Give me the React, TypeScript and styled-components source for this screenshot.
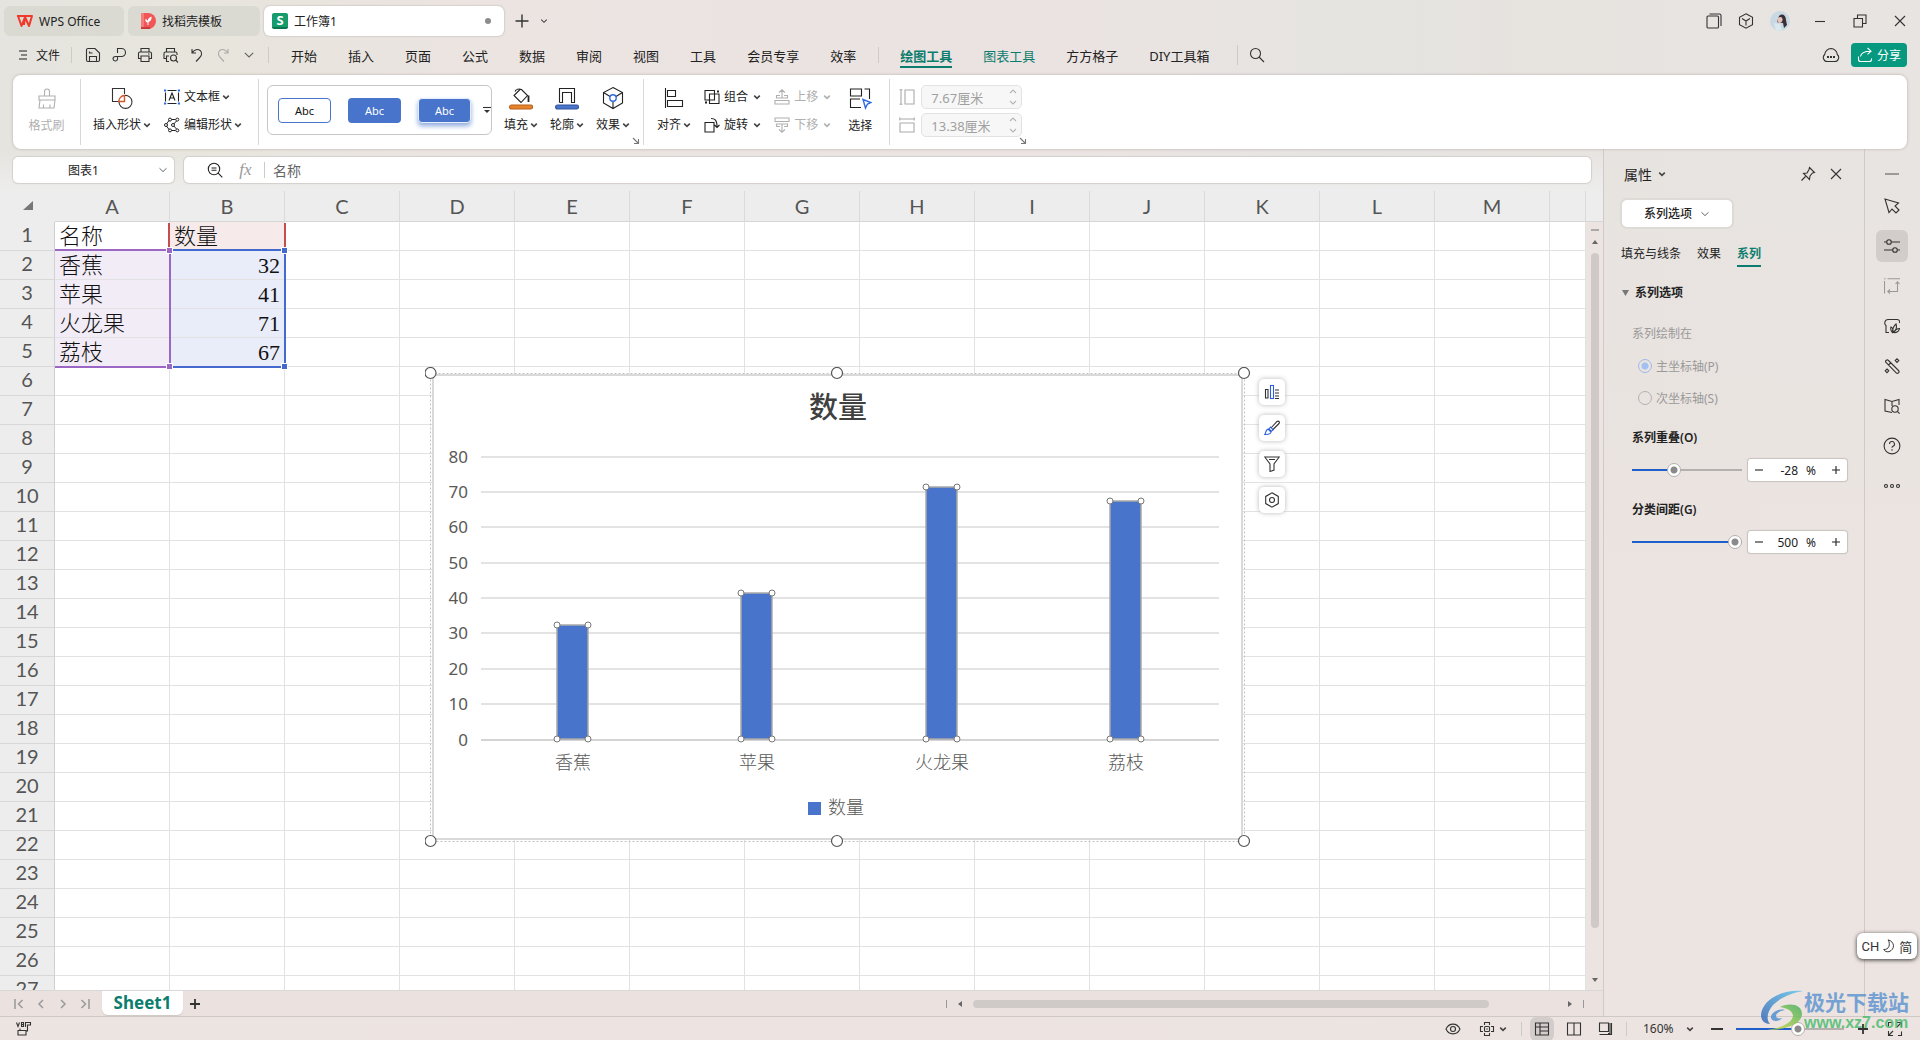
import React, { useState } from 'react';
import styled, { createGlobalStyle, css } from 'styled-components';

const UI = '"Noto Sans", "Noto Sans CJK SC", sans-serif';
const TEAL = '#0b7d6e';
const BLUE = '#4874cb';
const LINE = '#e2e2e2';

const Global = createGlobalStyle`
  *, *::before, *::after { box-sizing: border-box; }
  html, body { margin: 0; padding: 0; height: 100%; overflow: hidden; }
  body { font-family: ${UI}; font-size: 12px; color: #222; }
  #root { height: 100%; }
  button, input, select { font: inherit; color: inherit; margin: 0; padding: 0; border: 0; background: none; outline: none; }
  svg { display: block; flex: none; }
`;

/* ---------- icons ---------- */

type IconProps = { size?: number; box?: number; w?: number; color?: string; children: React.ReactNode };
const Icon = ({ size = 16, box = 16, w = 1.1, color = 'currentColor', children }: IconProps) => (
  <svg width={size} height={size} viewBox={`0 0 ${box} ${box}`} fill="none" stroke={color} strokeWidth={w} aria-hidden="true">
    {children}
  </svg>
);
const Chevron = ({ size = 8, w = 1.6, color = '#444' }: { size?: number; w?: number; color?: string }) => (
  <Icon size={size} box={8} w={w} color={color}><path d="M1.2 2.6 4 5.3l2.8-2.7" /></Icon>
);
const Thin = ({ size = 10 }: { size?: number }) => <Chevron size={size} w={0.8} color="#666" />;

const IcSave = () => <Icon><path d="M1.5 3A1.5 1.5 0 0 1 3 1.5h7L14.5 6v7a1.5 1.5 0 0 1-1.5 1.5H3A1.5 1.5 0 0 1 1.5 13zM4.5 14.5v-5h7v5M4.500 4.500v1.500h3" /></Icon>;
const IcShareLink = () => <Icon><path d="M6.500 6V1.500h4a4 4 0 0 1 0 8h-6A2.500 2.500 0 0 0 2 12a2.300 2.300 0 0 0 4.500.3V9.500" /></Icon>;
const IcPrint = () => <Icon><path d="M4 5V1.500h8V5M4 11.500H1.500v-5A1.500 1.500 0 0 1 3 5h10a1.500 1.500 0 0 1 1.500 1.500v5H12M4 9h8v5.500H4zM11 7h1.500" /></Icon>;
const IcPreview = () => <Icon><path d="M3.500 5V1.500h8V5M6 14.500H3.500v-3H1v-5A1.500 1.500 0 0 1 2.500 5h10A1.500 1.500 0 0 1 14 6.500V8M3.500 11.500V9H6" /><circle cx="10.500" cy="11" r="3" /><path d="m12.800 13.200 2.200 2.300" /></Icon>;
const IcUndo = () => <Icon><path d="M3 2v4h4M3.200 5.800C5 2.500 9 1.500 11.300 3.700c2.500 2.500 1 5.300-1 7.300L7 14.500" /></Icon>;
const IcRedo = () => <Icon><path d="M13 2v4H9M12.800 5.800C11 2.500 7 1.500 4.700 3.700c-2.500 2.500-1 5.300 1 7.300L9 14.500" /></Icon>;
const IcSearch = () => <Icon><circle cx="6.500" cy="6.500" r="5" /><path d="m10 10 5 5" /></Icon>;
const IcPages = () => <Icon><rect x="1" y="3" width="11.500" height="12" rx="1" /><path d="M3.500 1h10A1.500 1.500 0 0 1 15 2.500V13" /></Icon>;
const IcCube = () => <Icon><path d="M8 .8 14.500 4.300v7.400L8 15.200l-6.500-3.500V4.300zM4 5.500 8 8l4-2.500M8 8v4.500" /></Icon>;
const IcMin = () => <Icon><path d="M3 8.500h10" /></Icon>;
const IcRestore = () => <Icon><path d="M2 5.500h8.500V14H2zM5.500 5.500V2H14v8.500h-3.500" /></Icon>;
const IcClose = () => <Icon><path d="m3 3 10 10M13 3 3 13" /></Icon>;
const IcCloud = () => <Icon size={18} box={18}><path d="M5.500 15.500A4 4 0 0 1 2.700 8.500 6.500 6.500 0 0 1 9 2.500a6.500 6.500 0 0 1 6.300 6 4 4 0 0 1-2.800 7z" /><path d="M5 11h2M8 11h2M11 11h2" strokeWidth="2" /></Icon>;
const IcShare = () => <Icon><path d="M1.500 9.500v3a2 2 0 0 0 2 2h9a2 2 0 0 0 2-2v-1M3.500 9.500C4 6 7 4.200 13.500 4.200M10.500 1 14 4.200l-3.500 3.200" /></Icon>;
const IcBrush = () => <Icon size={24} box={24}><path d="M9.500 10V5.500a2.500 2.500 0 0 1 5 0V10M4 10h16v4H4zM5 14 4 22h15l1-8M8.500 22v-3.500M15 22v-3.500" /></Icon>;
const IcShapes = () => <Icon size={24} box={24} color="#333"><path d="M14.500 8V2.500h-12v13h6" /><path d="M14.500 9.500a6.500 6.500 0 1 1-5.500 6" /><path d="M8.800 15.500a6 6 0 0 1 5.700-6v6z" stroke="#d0592a" strokeWidth="1.400" /></Icon>;
const IcTextBox = () => <Icon><path d="M3.500 1.500h9M3.500 14.500h9M1.500 3.500v9M14.500 3.500v9" /><path d="m5 11.500 3-7.500 3 7.500M6 9h4" /><path d="M0 1.500h2.200M13.800 1.500H16M0 14.500h2.200M13.800 14.500H16" stroke="#2f6ae0" strokeWidth="2.200" /></Icon>;
const IcEditShape = () => <Icon w={1}><path d="M5 3.500 2.500 7M2.500 9 5 12.500M7.500 2.500h4M7.500 13.500h4M12.500 4 9.800 7M12.500 12 9.800 9" /><circle cx="6" cy="2.600" r="1.500" /><circle cx="13.300" cy="2.600" r="1.500" /><circle cx="2" cy="8" r="1.500" /><circle cx="9" cy="8" r="1.500" /><circle cx="6" cy="13.400" r="1.500" /><circle cx="13.300" cy="13.400" r="1.500" /></Icon>;
const IcFill = () => <Icon size={24} box={24}><path d="M6 5.500c1-2.500 4-3 6.500-2l6 6-6.500 7-7-7 6-6" /><path d="M19.500 9.500v6.500" strokeWidth="1.800" /><rect x=".6" y="19" width="23" height="4" rx="2" fill="#e8832d" stroke="#b9601a" /></Icon>;
const IcOutline = () => <Icon size={24} box={24}><path d="M4.500 16.500v-14h15v14h-3v-10h-9v10h-3" /><rect x=".6" y="19" width="23" height="4" rx="2" fill={BLUE} stroke="#32549b" /></Icon>;
const IcEffect = () => <Icon size={24} box={24}><path d="m12 1.500 9.500 5v10.500L12 22.500l-9.500-5.500V6.500zM2.500 6.500l6.500 4M21.500 6.500l-6.500 4M12 16v6.500" /><circle cx="12" cy="12" r="3.200" stroke="#2f6ae0" strokeWidth="1.400" /></Icon>;
const IcAlign = () => <Icon size={24} box={24}><path d="M3.500 2v20M5.500 4.500h8v6h-8zM5.500 14.500h15v6h-15z" /></Icon>;
const IcGroup = () => <Icon><path d="M1 1.500h9.500V11H1zM5.500 5H15v9.500H5.500z" /><path d="M13 2.500h2M1 13.500h2" strokeWidth="2" /></Icon>;
const IcRotate = () => <Icon><path d="M1 5.500h9V15H1zM7 1.500c4 0 6 1.500 6 8M10.500 8l2.500 2.500L15.500 8" /></Icon>;
const IcUp = () => <Icon><path d="M1 11.500h14V15H1zM5 9H2.500V6.500H6M11 9h2.500V6.500H10M5 9h6M8 9.500V1M5 3.500 8 .8l3 2.700" /></Icon>;
const IcDown = () => <Icon><path d="M1 1h14v3.500H1zM5 7H2.500v2.500H6M11 7h2.500v2.500H10M5 7h6M8 6.500V15M5 12.500l3 2.700 3-2.700" /></Icon>;
const IcSelect = () => <Icon size={24} box={24}><path d="M2.500 3h11v7h-11zM16.500 3h5v10M13 21.500H2.500V13H12" /><path d="m15 13.500 8 3-3.500 1.500-2 4z" stroke="#2f6ae0" strokeWidth="1.400" /></Icon>;
const IcHeight = () => <Icon><path d="M2 .8v14.400M.5.800h3M.5 15.200h3M6 1h9v14H6z" /></Icon>;
const IcWidth = () => <Icon><path d="M.8 2h14.400M.8.500v3M15.200.500v3M1 6h14v9H1z" /></Icon>;
const IcCorner = () => <Icon size={8} box={8}><path d="m1 1 5.500 5.500M6.500 2v4.500H2" /></Icon>;
const IcZoomOut = () => <Icon><circle cx="7" cy="7" r="5.700" /><path d="M4.500 6h5M4.500 8.300h5M11.200 11.200 15.300 15.300" /></Icon>;
const IcPin = () => <Icon><path d="m9.500 1.500 5 5-2 .5-2.500 3-.5 3.500-6-6L7 7l2-3.500zM5.500 10.500l-4 4" /></Icon>;
const IcDash = () => <Icon w={1.6} color="#888"><path d="M1 8h14" /></Icon>;
const IcCursor = () => <Icon><path d="m1 1 4 13.500 3-3.500 4 4 3-3-4-4 3.500-3z" /></Icon>;
const IcSliders = () => <Icon><path d="M0 4h2.500M7.500 4H16M0 12h8.500M13.500 12H16" /><circle cx="5" cy="4" r="2.300" /><circle cx="11" cy="12" r="2.300" /></Icon>;
const IcTranspose = () => <Icon color="#999"><path d="M.5 3v12.500M3.500.8H16M0 .8h1.500M13.500 4v9.500H4M11.500 6l2-2.200 2 2.200M6 11.500l-2.200 2L6 15.500" /></Icon>;
const IcGallery = () => <Icon><path d="M5 14.500H2V7.500C-.2 6 .8 1.500 4 1.500h9c2 0 3 1.500 2.500 3.500" /><path d="M8.500 14.500C6.500 12.500 6.500 10.500 7 9c2 1 2.500 3 1.500 5.500zc0-4 1-6.500 3.500-8.500 1 3.500 0 7-3.500 8.500zM9.500 14.500c2-3 4-4 6-4-.5 3-3 4.500-6 4z" /></Icon>;
const IcMagic = () => <Icon><path d="m4.500 2.500 10 10a1.400 1.400 0 0 1-2.300 2.300L2 4.500a1.600 1.600 0 0 1 2.500-2zM4.500 7l2.500-2.500" /><path d="m13 .8 1.800 1.800L13 4.400l-1.800-1.800zM3 11l1.800 1.800L3 14.600l-1.800-1.800z" /></Icon>;
const IcBook = () => <Icon><path d="M8 14.500 1 13V1.500l7 2 7-2V7M8 3.500V8" /><circle cx="11" cy="11" r="3.200" /><path d="m13.300 13.300 2.300 2.300" /></Icon>;
const IcHelp = () => <Icon size={18} box={18}><circle cx="9" cy="9" r="7.900" /><path d="M6.500 7a2.500 2.500 0 1 1 3.500 2.300c-.8.400-1 .7-1 1.500M9 12.300v1.400" /></Icon>;
const IcDots = () => <Icon><circle cx="2" cy="8" r="1.500" /><circle cx="8" cy="8" r="1.500" /><circle cx="14" cy="8" r="1.500" /></Icon>;
const IcChartEl = () => <Icon color="#333"><path d="M1.500 5.500H4V14H1.500zM11 6h4M11 9h4M11 12h4M11 14.500h4" /><path d="M6.500 1.500h3v13h-3z" stroke="#2f5fe0" /></Icon>;
const IcStyle = () => <Icon color="#333"><path d="m7 8 6-6.500a1.400 1.400 0 0 1 2 2L8.500 10" /><path d="M.8 14.500c1-1 .5-3 2-4.500a2.300 2.300 0 0 1 3.400 3.300c-1.400 1.300-3.500 1.200-5.400 1.200zM4.500 9.500l2-2.500 2.700 2.700-2.500 2z" stroke="#2f5fe0" /></Icon>;
const IcFilter = () => <Icon color="#333"><path d="M.8 1h14.400L10 8v6l-4 1.500V8zM5 3.500h6" /></Icon>;
const IcHex = () => <Icon color="#333"><path d="M8 .8 14.300 4.400v7.200L8 15.200l-6.300-3.600V4.400z" /><circle cx="8" cy="8" r="2.500" /></Icon>;
const IcEye = () => <Icon><path d="M1 8c3-6.500 11-6.500 14 0-3 6.500-11 6.500-14 0z" /><circle cx="8" cy="8" r="2.500" /></Icon>;
const IcCross = () => <Icon><path d="M5.500 4V1.500h5V4M5.500 12v2.500h5V12M4 5.500H1.500v5H4M12 5.500h2.500v5H12" /><rect x="5.500" y="5.500" width="5" height="5" rx="1" /><path d="M8 7.200v1.600" /></Icon>;
const IcNormal = () => <Icon><path d="M1.500 2h13v12h-13zM1.500 6h13M6 2v12M6 10h8.500" /></Icon>;
const IcBreak = () => <Icon><path d="M1.500 2h13v12h-13zM8 2v12" /></Icon>;
const IcPageView = () => <Icon><path d="M1.500 2h9v8.500h-9zM13.500 2v11.500h-12M10 12.500h2V2" /></Icon>;
const IcFull = () => <Icon><path d="M10 1.500h4.500V6M14.500 1.500 10 6M6 14.500H1.500V10M1.500 14.500 6 10M1.500 5.500v-4H5M14.500 10.500v4H11" /></Icon>;
const IcMoon = () => <Icon size={14}><path d="M7 1c8 2 8 11 1 13.500-3 .5-5-.5-6-2.500 6 .5 8-6 5-11z" /></Icon>;

/* ---------- shell ---------- */

const Shell = styled.div`
  position: relative; display: flex; flex-direction: column; height: 100vh; overflow: hidden;
  background:
    linear-gradient(180deg, rgba(237, 228, 225, 0) 20%, rgba(237, 228, 225, .9) 70%),
    linear-gradient(90deg, #e5e4df 0%, #e7e5dc 9%, #ebe4e1 24%, #ebe3e1 54%, #e5e4e1 71%, #e7e3df 80%, #e8e4e1 100%);
`;
const IconButton = styled.button<{ $w?: number; $h?: number; $active?: boolean; $muted?: boolean }>`
  display: inline-flex; align-items: center; justify-content: center; flex: none; gap: 4px;
  width: ${p => p.$w ?? 26}px; height: ${p => p.$h ?? 24}px; border-radius: 6px;
  color: ${p => (p.$muted ? '#aaa' : '#333')};
  background: ${p => (p.$active ? '#d2cdca' : 'transparent')};
`;
const Spacer = styled.div`flex: 1;`;

const TitleBar = styled.header`
  display: flex; align-items: center; height: 40px; padding: 2px 7px 0 4px; gap: 4px;
`;
const DocTab = styled.button<{ $w: number; $active?: boolean }>`
  display: flex; align-items: center; gap: 6px; width: ${p => p.$w}px; height: 30px;
  padding: 0 13px 0 ${p => (p.$active ? 8 : 13)}px; border-radius: 6px; text-align: left;
  ${p => p.$active
    ? css`background: #fff; box-shadow: 0 0 2px #aaa39f;`
    : css`background: #dadad3;`}
`;
const Badge = styled.span`
  display: grid; place-items: center; width: 16px; height: 16px; border-radius: 2px;
  background: #159b6c; border-bottom: 2px solid #0d7551; color: #fff; font-size: 13px; line-height: 14px; font-weight: 700;
`;
const Unsaved = styled.i`width: 6px; height: 6px; border-radius: 50%; background: #8c8c8c; margin-left: auto;`;
const WinButtons = styled.div`display: flex; align-items: center; gap: 6px;`;
const WinGroup = styled.div`display: flex; gap: 14px; margin-left: 8px;`;

const MenuBar = styled.nav`display: flex; align-items: center; height: 35px; padding: 0 13px 5px 12px;`;
const FileButton = styled.button`display: flex; align-items: center; gap: 8px; padding-left: 6px; width: 59px; height: 24px;`;
const VLine = styled.i<{ $h?: number; $m?: string }>`
  width: 1px; height: ${p => p.$h ?? 16}px; margin: ${p => p.$m ?? '0'}; background: #cfcac6; flex: none;
`;
const MenuTabs = styled.div`display: flex; align-items: center; gap: 31px; padding-top: 1px;`;
const MenuTab = styled.button<{ $tone?: 'teal'; $on?: boolean }>`
  font-size: 13px; line-height: 20px; padding-top: 2px; white-space: nowrap;
  color: ${p => (p.$tone ? TEAL : '#222')};
  font-weight: ${p => (p.$on ? 700 : 400)};
  border-bottom: 2px solid ${p => (p.$on ? TEAL : 'transparent')};
`;
const ShareButton = styled.button`
  display: flex; align-items: center; gap: 4px; height: 24px; padding: 0 6px; margin-left: 7px;
  background: #06997f; color: #fff; border-radius: 4px; font-size: 12px;
`;

const Ribbon = styled.section`
  display: flex; align-items: flex-start; height: 74px; margin: 0 13px; background: #fff; border-radius: 8px;
  box-shadow: 0 0 3px #b5aeaa; position: relative; z-index: 2; flex: none;
`;
const RibbonLine = styled.i<{ $l?: number; $r?: number }>`
  width: 1px; height: 66px; background: #d8d8d8; margin: 4px ${p => p.$r ?? 0}px 0 ${p => p.$l ?? 0}px; flex: none;
`;
const BigTool = styled.button<{ $w?: number; $off?: boolean }>`
  display: flex; flex-direction: column; align-items: center; gap: 6px; padding-top: 11px;
  ${p => p.$w && css`width: ${p.$w}px;`}
  color: ${p => (p.$off ? '#b0b0b0' : '#222')}; white-space: nowrap;
`;
const Label = styled.span`display: flex; align-items: center; gap: 2px; line-height: 18px; white-space: nowrap;`;
const Stack = styled.div<{ $l?: number }>`
  display: flex; flex-direction: column; gap: 4px; padding-top: 10px; margin-left: ${p => p.$l ?? 0}px;
`;
const SmallTool = styled.button`
  display: flex; align-items: center; gap: 4px; height: 24px; white-space: nowrap; color: #222;
  &:disabled { color: #b0b0b0; }
`;
const ToolRow = styled.div<{ $l?: number; $gap?: number }>`display: flex; gap: ${p => p.$gap ?? 0}px; margin-left: ${p => p.$l ?? 0}px;`;
const Gallery = styled.div`
  display: flex; align-items: center; gap: 17px; width: 225px; height: 50px; margin: 10px 0 0 8px; padding: 0 2px 0 10px;
  border: 1px solid #c6c6c6; border-radius: 6px;
`;
const Swatch = styled.button<{ $kind: 'outline' | 'solid' | 'raised' }>`
  width: 53px; height: 25px; border-radius: 4px; font-size: 11px; flex: none;
  ${p => p.$kind === 'outline' && css`border: 1px solid ${BLUE}; color: #111;`}
  ${p => p.$kind !== 'outline' && css`background: ${BLUE}; color: #fff;`}
  ${p => p.$kind === 'raised' && css`border: 1px solid #e6edfb; box-shadow: 0 3px 5px #8fabdf;`}
`;
const MoreButton = styled.button`margin-left: -5px; color: #333;`;
const CornerButton = styled.button<{ $l?: number }>`
  align-self: flex-end; padding-bottom: 3px; color: #777; width: 8px; height: 13px; margin-left: ${p => p.$l ?? 2}px;
`;
const SizeRow = styled.label`display: flex; align-items: center; gap: 6px; height: 24px; color: #aaa;`;
const SizeField = styled.span`
  display: flex; align-items: center; width: 101px; height: 24px; padding: 0 0 0 9px;
  border: 1px solid #e2e2e2; border-radius: 5px; background: #f7f7f7;
`;
const SizeInput = styled.input`flex: 1; min-width: 0; font-size: 13px; color: #a0a0a0;`;
const Arrows = () => <Icon size={16} color="#b5b5b5"><path d="m5 4 3-3 3 3M5 12l3 3 3-3" /></Icon>;

/* ---------- worksheet ---------- */

const Body = styled.main`display: flex; flex: 1; min-height: 0;`;
const Work = styled.section`
  display: flex; flex-direction: column; flex: 1; min-width: 0;
  background: linear-gradient(180deg, rgba(237,237,237,0) 0, #ededed 42px, #ededed 200px);
`;
const FormulaBar = styled.div`display: flex; gap: 10px; padding: 8px 12px 8px 13px;`;
const Field = styled.div<{ $w?: number }>`
  display: flex; align-items: center; height: 26px; background: #fff; border-radius: 5px; box-shadow: 0 0 1px 1px #d3cfcc;
  ${p => (p.$w ? css`width: ${p.$w}px; padding-right: 6px;` : css`flex: 1; padding-left: 23px;`)}
`;
const NameInput = styled.input`flex: 1; min-width: 0; text-align: center; font-size: 12px; padding-right: 4px;`;
const FormulaInput = styled.input`flex: 1; min-width: 0; padding-left: 8px; font-size: 14px; color: #666;`;
const Fx = styled.span`
  width: 41px; text-align: center; padding-left: 4px; font: italic 17px "Liberation Serif", serif; color: #999;
`;
const GridRow = styled.div`display: flex; flex: 1; min-height: 0;`;
const Canvas = styled.div`position: relative; flex: 1; min-width: 0; overflow: hidden; background: #fff;`;
const Sheet = styled.table`
  table-layout: fixed; width: 100%; border-collapse: separate; border-spacing: 0;
  th { background: #ededed; font: 400 20px/28px Lato, sans-serif; color: #555; padding: 0; text-align: center; }
  thead th { height: 31px; border-right: 1px solid #dadada; border-bottom: 1px solid #d6d6d6; }
  thead th:first-child { border-color: #ededed; }
  tbody th { height: 29px; border-right: 1px solid #d0d0d0; border-bottom: 1px solid #d8d8d8; padding-bottom: 4px; line-height: 24px; }
`;
const Col = styled.col<{ $w?: number }>`${p => p.$w && css`width: ${p.$w}px;`}`;
const Cell = styled.td<{ $fill?: string; $num?: boolean }>`
  height: 29px; padding: 2px 4px 0; border-right: 1px solid ${LINE}; border-bottom: 1px solid ${LINE};
  background: ${p => p.$fill ?? '#fff'}; text-align: ${p => (p.$num ? 'right' : 'left')};
  font: 300 22px/26px "Liberation Serif", "Noto Sans CJK SC", serif; color: #111; white-space: nowrap;
`;
const Range = styled.i<{ $x: number; $y: number; $w: number; $h: number; $c: string; $sides: string }>`
  position: absolute; left: ${p => p.$x}px; top: ${p => p.$y}px; width: ${p => p.$w}px; height: ${p => p.$h}px;
  border: solid ${p => p.$c}; border-width: ${p => p.$sides}; pointer-events: none;
`;
const Grip = styled.i<{ $x: number; $y: number; $c: string }>`
  position: absolute; left: ${p => p.$x - 3}px; top: ${p => p.$y - 3}px; width: 7px; height: 7px;
  background: ${p => p.$c}; border: 1px solid #fff;
`;
const ChartFrame = styled.figure`position: absolute; left: 425px; top: 176px; margin: 0;`;
const ChartTools = styled.div`position: absolute; left: 1259px; top: 188px; display: flex; flex-direction: column; gap: 10px;`;
const ChartTool = styled.button`
  display: grid; place-items: center; width: 26px; height: 26px; background: #fff; border-radius: 5px; box-shadow: 0 0 5px #b8b8b8;
`;
const VScroll = styled.div`width: 17px; display: flex; flex-direction: column; align-items: center; color: #777;`;
const VTrack = styled.div`
  flex: 1; width: 17px; display: flex; flex-direction: column; align-items: center; gap: 6px; padding: 7px 0 6px;
  background: #ebe4e1; border-top: 1px solid #d6d6d6;
`;
const VHead = styled.div`height: 30px;`;
const VRail = styled.div`flex: 1; width: 8px; padding-bottom: 42px; display: flex;`;
const Thumb = styled.div`flex: 1; background: #cfcac8; border-radius: 4px; height: 100%;`;

const SheetBar = styled.div`
  display: flex; align-items: center; height: 26px; padding: 0 19px 0 11px; background: #ebe2df; border-top: 1px solid #d8d8d8;
`;
const NavButton = styled.button`width: 22px; height: 20px; display: grid; place-items: center; color: #999; padding-right: 6px;`;
const SheetTab = styled.button`
  align-self: flex-start; height: 24px; width: 81px; margin-left: 3px; background: #fff; color: ${TEAL}; font-weight: 700; font-size: 17px; line-height: 22px;
  border-radius: 0 0 6px 6px; box-shadow: 0 1px 1px #cfc8c5;
`;
const HScroll = styled.div`display: flex; align-items: center; gap: 9px; width: 638px; color: #666;`;
const HRail = styled.div`flex: 1; height: 8px; padding-right: 68px;`;
const Tick = styled.i`width: 1px; height: 8px; background: #999;`;

/* ---------- property panel ---------- */

const Panel = styled.aside`width: 261px; flex: none; border-left: 1px solid #d0cbc8; padding: 12px 16px 0 17px;`;
const PanelHead = styled.div`display: flex; align-items: center; height: 26px; padding: 0 0 0 3px; gap: 4px;`;
const PanelTitle = styled.button`display: flex; align-items: center; gap: 6px; font-size: 14px;`;
const SelectBox = styled.div`
  display: grid; align-items: center; width: 110px; margin: 13px 0 0 1px;
  > * { grid-area: 1 / 1; }
  > svg { justify-self: end; margin-right: 22px; pointer-events: none; }
`;
const Select = styled.select`
  appearance: none; height: 27px; padding-left: 22px; background: #fff; border-radius: 5px; box-shadow: 0 0 0 2px #dedad6; font-weight: 500;
`;
const PanelTabs = styled.div`display: flex; gap: 16px; margin-top: 17px;`;
const PanelTab = styled.button<{ $on?: boolean }>`
  line-height: 20px; padding-bottom: 1px; border-bottom: 2px solid ${p => (p.$on ? TEAL : 'transparent')};
  color: ${p => (p.$on ? TEAL : '#222')}; font-weight: ${p => (p.$on ? 700 : 400)};
`;
const SectionTitle = styled.h2`
  display: flex; align-items: center; gap: 5px; margin: 16px 0 0 1px; font-size: 12px; line-height: 20px; font-weight: 600;
`;
const Options = styled.fieldset`border: 0; margin: 21px 0 20px 11px; padding: 0; color: #999;`;
const Legend = styled.legend`padding: 0; line-height: 20px; margin-bottom: 12px;`;
const RadioRow = styled.label`display: flex; align-items: center; gap: 4px; height: 20px; margin: 0 0 0 6px; & + & { margin-top: 12px; }`;
const Radio = styled.input`
  appearance: none; width: 14px; height: 14px; border-radius: 50%; border: 1px solid #b5b1ae;
  &:checked { border-color: #9db9ea; background: radial-gradient(circle, #a3c0f2 0 3px, transparent 4px); }
`;
const SliderBlock = styled.div`margin: 0 0 0 11px; padding-bottom: 18px;`;
const SliderLabel = styled.label`display: block; line-height: 20px; font-weight: 600; margin-bottom: 10px;`;
const SliderRow = styled.div`display: flex; align-items: center; gap: 6px; height: 24px;`;
const Slider = styled.input<{ $w: number; $pct: number }>`
  appearance: none; width: ${p => p.$w}px; height: 14px; flex: none;
  background: linear-gradient(90deg, #1f5fcc ${p => p.$pct}%, #b5b0ad ${p => p.$pct}%) center / 100% 2px no-repeat;
  &::-webkit-slider-thumb {
    appearance: none; width: 14px; height: 14px; border-radius: 50%; border: 1px solid #b5b1ae;
    background: radial-gradient(circle, #8a8a8a 0 3px, #fff 4px);
  }
`;
const Stepper = styled.span`
  display: flex; align-items: center; width: 99px; height: 22px; background: #fff; border-radius: 3px; box-shadow: 0 0 1px 1px #c6c2bf;
`;
const StepInput = styled.input`width: 28px; text-align: right; margin-right: 8px;`;
const StepButton = styled.button`width: 22px; height: 22px; display: grid; place-items: center;`;

const Rail = styled.aside`
  width: 56px; flex: none; border-left: 1px solid #d0cbc8; display: flex; flex-direction: column; align-items: center; gap: 8px; padding: 17px 1px 0 0;
`;

const StatusBar = styled.footer`
  display: flex; align-items: center; height: 24px; padding: 0 12px 0 16px; border-top: 1px solid #cfc8c5; flex: none; color: #333;
`;
const StatusGroup = styled.div<{ $gap: number; $r?: number }>`display: flex; align-items: center; gap: ${p => p.$gap}px; margin-right: ${p => p.$r ?? 0}px;`;
const ZoomSelect = styled.div`
  display: grid; align-items: center; width: 53px; margin: 0 10px 0 14px;
  > * { grid-area: 1 / 1; }
  > svg { justify-self: end; pointer-events: none; }
`;
const ZoomField = styled.select`appearance: none; font-size: 12px; height: 20px; padding: 0 16px 0 2px;`;
const Ime = styled.div`
  position: absolute; right: 3px; bottom: 81px; width: 60px; height: 26px; z-index: 3;
  display: flex; align-items: center; justify-content: center; gap: 3px;
  background: #fff; border-radius: 6px; box-shadow: 0 1px 4px #333; font: 13px Roboto, "Noto Sans CJK SC", sans-serif; color: #333;
`;
const Mark = styled.div`
  position: absolute; right: 11px; bottom: 7px; z-index: 4; display: flex; align-items: center; pointer-events: none; opacity: .82;
`;
const MarkText = styled.div`display: flex; flex-direction: column;`;
const MarkName = styled.span`font: 700 21px/24px "Noto Sans CJK SC", sans-serif; color: #5b93d0; white-space: nowrap;`;
const MarkUrl = styled.span`font: 700 16px/20px "Liberation Sans", sans-serif; color: #48bb6c;`;

/* ---------- data ---------- */

const DATA = [
  { name: '香蕉', value: 32 },
  { name: '苹果', value: 41 },
  { name: '火龙果', value: 71 },
  { name: '荔枝', value: 67 },
];
const COLS = 'ABCDEFGHIJKLM'.split('');
const ROWS = Array.from({ length: 27 }, (_, i) => i + 1);
const PURPLE = '#9b66c4';
const RED = '#c74c50';
const DEEP = '#4469cf';

const Chart = () => {
  const plot = { left: 56, right: 794, top: 90, bottom: 373, max: 80 };
  const y = (v: number) => plot.bottom - ((plot.bottom - plot.top) * v) / plot.max;
  const slot = (plot.right - plot.left) / DATA.length;
  const barW = 31;
  const serif = '"Liberation Serif", "Noto Sans CJK SC", serif';
  return (
    <svg width="826" height="481" viewBox="0 0 826 481" role="img" aria-label="数量">
      <rect x="8" y="8" width="809" height="464" fill="#fff" stroke="#d9d9d9" strokeWidth="2" />
      <rect x="5.500" y="6.500" width="814" height="468" fill="none" stroke="#c4c4c4" strokeDasharray="2 2" />
      <text x="413" y="51" textAnchor="middle" fontFamily={serif} fontSize="29" fontWeight="500" fill="#404040">数量</text>
      {[0, 10, 20, 30, 40, 50, 60, 70, 80].map(t => (
        <g key={t}>
          <line x1={plot.left} x2={plot.right} y1={Math.floor(y(t))} y2={Math.floor(y(t))} stroke={t ? '#e3e3e3' : '#d4d4d4'} strokeWidth="2" />
          <text x="43" y={Math.floor(y(t)) + 6} textAnchor="end" fontFamily="Noto Sans, sans-serif" fontSize="17" fill="#595959">{t}</text>
        </g>
      ))}
      {DATA.map((d, i) => {
        const cx = Math.floor(plot.left + slot * (i + 0.5));
        const x = Math.floor(cx - barW / 2);
        const top = Math.floor(y(d.value)) - 1;
        return (
          <g key={d.name}>
            <rect x={x} y={top} width={barW} height={plot.bottom - top - 1} fill={BLUE} stroke="#a9a9a9" strokeWidth="1.500" />
            {[[x, top], [x + barW, top], [x, plot.bottom - 1], [x + barW, plot.bottom - 1]].map(([hx, hy]) => (
              <circle key={`${hx}-${hy}`} cx={hx} cy={hy} r="3" fill="#fff" stroke="#777" />
            ))}
            <text x={cx} y="402" textAnchor="middle" fontFamily={serif} fontSize="18" fontWeight="300" fill="#595959">{d.name}</text>
          </g>
        );
      })}
      <rect x="383" y="435" width="13" height="13" fill={BLUE} />
      <text x="403" y="447" fontFamily={serif} fontSize="18" fontWeight="300" fill="#595959">数量</text>
      {[5.5, 412, 819].flatMap(cx => [6, 474].map(cy => (
        <circle key={`${cx}-${cy}`} cx={cx} cy={cy} r="5.500" fill="#fff" stroke="#555" strokeWidth="1.200" />
      )))}
    </svg>
  );
};

const fillOf = (row: number, col: string) => {
  if (row === 1 && col === 'B') return '#f7eaea';
  if (row >= 2 && row <= 5 && col === 'A') return '#f2ecf7';
  if (row >= 2 && row <= 5 && col === 'B') return '#e9edf9';
  return undefined;
};
const valueOf = (row: number, col: string): string | number | null => {
  if (row === 1) return col === 'A' ? '名称' : col === 'B' ? '数量' : null;
  const d = DATA[row - 2];
  return d ? (col === 'A' ? d.name : col === 'B' ? d.value : null) : null;
};

type StepProps = { id: string; label: string; value: number; min: number; max: number; onChange: (v: number) => void };
const SliderField = ({ id, label, value, min, max, onChange }: StepProps) => (
  <SliderBlock>
    <SliderLabel htmlFor={id}>{label}</SliderLabel>
    <SliderRow>
      <Slider id={id} type="range" $w={110} $pct={((value - min) / (max - min)) * 100} min={min} max={max} value={value}
        onChange={e => onChange(Number(e.target.value))} />
      <Stepper>
        <StepButton aria-label="减少" onClick={() => onChange(Math.max(min, value - 1))}><Icon size={10} box={10}><path d="M1 5h8" /></Icon></StepButton>
        <StepInput aria-label={label} value={value} onChange={e => onChange(Number(e.target.value) || 0)} />
        %
        <Spacer />
        <StepButton aria-label="增加" onClick={() => onChange(Math.min(max, value + 1))}><Icon size={10} box={10}><path d="M1 5h8M5 1v8" /></Icon></StepButton>
      </Stepper>
    </SliderRow>
  </SliderBlock>
);

const MAIN_TABS = ['开始', '插入', '页面', '公式', '数据', '审阅', '视图', '工具', '会员专享', '效率'];

export default function App() {
  const [overlap, setOverlap] = useState(-28);
  const [gap, setGap] = useState(500);
  const [zoom, setZoom] = useState(58);
  return (
    <Shell>
      <Global />
      <TitleBar>
        <DocTab $w={120}>
          <svg width="16" height="12" viewBox="0 0 16 12" fill="none" stroke="#f0392b" strokeWidth="2"><path d="M0 1h15L12 11 8 2 4.500 11 1 1M8 2l-1 8" strokeLinejoin="round" /></svg>
          WPS Office
        </DocTab>
        <DocTab $w={132}>
          <svg width="15" height="16" viewBox="0 0 15 16"><path d="M0 0h7a8 8 0 0 1 0 16H0z" fill="#f25555" /><path d="M0 0h3v14H0z" fill="#f57a78" /><path d="M0 14h9v2H0z" fill="#c93a3a" /><path d="M6.500 12V9.500C4.500 9 4 7.500 4.500 6c1 .3 1.800 1 2.200 2C7 6 8 4 10.500 3.500c.5 3-1 5-3 5.500v3z" fill="#fff" /></svg>
          找稻壳模板
        </DocTab>
        <DocTab $w={240} $active>
          <Badge>S</Badge>工作簿1<Unsaved />
        </DocTab>
        <IconButton aria-label="新建" $w={28}><Icon w={1.4}><path d="M8 1.500v13M1.500 8h13" /></Icon></IconButton>
        <IconButton aria-label="标签列表" $w={8}><Chevron w={1.1} /></IconButton>
        <Spacer />
        <WinButtons>
          <IconButton aria-label="窗口"><IcPages /></IconButton>
          <IconButton aria-label="应用"><IcCube /></IconButton>
          <IconButton aria-label="账户" $w={30}>
            <svg width="20" height="20" viewBox="0 0 20 20"><circle cx="10" cy="10" r="10" fill="#c9d9e4" /><path d="M9 5c3-3 7-1 7 4l1 5-3 3-1-5-4 0-2-1z" fill="#3a2f38" /><path d="M8 7c2-2 5-1 4.500 2s-3 4-5 2z" fill="#e6c3b8" /><path d="M4 12l6 1 2 6.500H6z" fill="#dbe8ee" /></svg>
          </IconButton>
        </WinButtons>
        <WinGroup>
          <IconButton aria-label="最小化"><IcMin /></IconButton>
          <IconButton aria-label="还原"><IcRestore /></IconButton>
          <IconButton aria-label="关闭"><IcClose /></IconButton>
        </WinGroup>
      </TitleBar>

      <MenuBar>
        <FileButton><Icon size={10} box={10}><path d="M1 1h8M3 5h6M1 9h8" /></Icon>文件</FileButton>
        <VLine $m="0 8px 0 0" />
        <IconButton aria-label="保存"><IcSave /></IconButton>
        <IconButton aria-label="导出"><IcShareLink /></IconButton>
        <IconButton aria-label="打印"><IcPrint /></IconButton>
        <IconButton aria-label="打印预览"><IcPreview /></IconButton>
        <IconButton aria-label="撤销"><IcUndo /></IconButton>
        <IconButton aria-label="恢复" $muted><IcRedo /></IconButton>
        <IconButton aria-label="更多"><Thin size={12} /></IconButton>
        <VLine $m="0 22px 0 6px" />
        <MenuTabs>
          {MAIN_TABS.map(t => <MenuTab key={t}>{t}</MenuTab>)}
        </MenuTabs>
        <VLine $m="0 21px 0 22px" />
        <MenuTabs>
          <MenuTab $tone="teal" $on>绘图工具</MenuTab>
          <MenuTab $tone="teal">图表工具</MenuTab>
          <MenuTab>方方格子</MenuTab>
          <MenuTab>DIY工具箱</MenuTab>
        </MenuTabs>
        <VLine $m="0 6px 0 28px" $h={20} />
        <IconButton aria-label="搜索"><IcSearch /></IconButton>
        <Spacer />
        <IconButton aria-label="云服务"><IcCloud /></IconButton>
        <ShareButton><IcShare />分享</ShareButton>
      </MenuBar>

      <Ribbon>
        <BigTool $w={67} $off disabled><IcBrush />格式刷</BigTool>
        <RibbonLine $r={12} />
        <BigTool><IcShapes /><Label>插入形状<Chevron /></Label></BigTool>
        <Stack $l={13}>
          <SmallTool><IcTextBox /><Label>文本框<Chevron /></Label></SmallTool>
          <SmallTool><IcEditShape /><Label>编辑形状<Chevron /></Label></SmallTool>
        </Stack>
        <RibbonLine $l={16} />
        <Gallery>
          <Swatch $kind="outline">Abc</Swatch>
          <Swatch $kind="solid">Abc</Swatch>
          <Swatch $kind="raised">Abc</Swatch>
          <MoreButton aria-label="更多样式"><Icon size={8} box={8}><path d="M0 1.500h8" /><path d="M1 4h6L4 7z" fill="currentColor" stroke="none" /></Icon></MoreButton>
        </Gallery>
        <ToolRow $l={12} $gap={12}>
          <BigTool><IcFill /><Label>填充<Chevron /></Label></BigTool>
          <BigTool><IcOutline /><Label>轮廓<Chevron /></Label></BigTool>
          <BigTool><IcEffect /><Label>效果<Chevron /></Label></BigTool>
        </ToolRow>
        <CornerButton aria-label="形状样式设置"><IcCorner /></CornerButton>
        <RibbonLine $l={3} $r={13} />
        <BigTool><IcAlign /><Label>对齐<Chevron /></Label></BigTool>
        <Stack $l={13}>
          <SmallTool><IcGroup /><Label>组合&nbsp;<Chevron /></Label></SmallTool>
          <SmallTool><IcRotate /><Label>旋转&nbsp;<Chevron /></Label></SmallTool>
        </Stack>
        <Stack $l={13}>
          <SmallTool disabled><IcUp /><Label>上移&nbsp;<Chevron color="#b0b0b0" /></Label></SmallTool>
          <SmallTool disabled><IcDown /><Label>下移&nbsp;<Chevron color="#b0b0b0" /></Label></SmallTool>
        </Stack>
        <ToolRow $l={17}><BigTool><IcSelect />选择</BigTool></ToolRow>
        <RibbonLine $l={17} $r={9} />
        <Stack>
          <SizeRow><IcHeight /><SizeField><SizeInput aria-label="高度" disabled value="7.67厘米" readOnly /><Arrows /></SizeField></SizeRow>
          <SizeRow><IcWidth /><SizeField><SizeInput aria-label="宽度" disabled value="13.38厘米" readOnly /><Arrows /></SizeField></SizeRow>
        </Stack>
        <CornerButton aria-label="大小设置" $l={-3}><IcCorner /></CornerButton>
      </Ribbon>

      <Body>
        <Work>
          <FormulaBar>
            <Field $w={161}><NameInput aria-label="名称框" defaultValue="图表1" /><Thin /></Field>
            <Field>
              <IcZoomOut /><Fx>fx</Fx><VLine />
              <FormulaInput aria-label="编辑栏" defaultValue="名称" />
            </Field>
          </FormulaBar>
          <GridRow>
            <Canvas>
              <Sheet>
                <colgroup>
                  <Col $w={55} />
                  {COLS.map(c => <Col key={c} $w={115} />)}
                  <Col />
                </colgroup>
                <thead>
                  <tr>
                    <th aria-label="全选"><svg width="34" height="10" viewBox="0 0 34 10"><path d="M33 0v9H23z" fill="#777" /></svg></th>
                    {COLS.map(c => <th key={c} scope="col">{c}</th>)}
                    <th />
                  </tr>
                </thead>
                <tbody>
                  {ROWS.map(r => (
                    <tr key={r}>
                      <th scope="row">{r}</th>
                      {COLS.map(c => {
                        const v = valueOf(r, c);
                        return <Cell key={c} $fill={fillOf(r, c)} $num={typeof v === 'number'}>{v}</Cell>;
                      })}
                      <Cell />
                    </tr>
                  ))}
                </tbody>
              </Sheet>
              <Range $x={168} $y={32} $w={118} $h={26} $c={RED} $sides="0 2px" />
              <Range $x={173} $y={58} $w={113} $h={119} $c={DEEP} $sides="2px 2px 2px 0" />
              <Range $x={55} $y={58} $w={116} $h={119} $c={PURPLE} $sides="2px 2px 2px 0" />
              <Grip $x={169} $y={59} $c={PURPLE} /><Grip $x={169} $y={175} $c={PURPLE} />
              <Grip $x={284} $y={59} $c={DEEP} /><Grip $x={284} $y={175} $c={DEEP} />
              <ChartFrame><Chart /></ChartFrame>
              <ChartTools>
                <ChartTool aria-label="图表元素"><IcChartEl /></ChartTool>
                <ChartTool aria-label="图表样式"><IcStyle /></ChartTool>
                <ChartTool aria-label="图表筛选器"><IcFilter /></ChartTool>
                <ChartTool aria-label="设置图表区域格式"><IcHex /></ChartTool>
              </ChartTools>
            </Canvas>
            <VScroll>
              <VHead />
              <VTrack>
                <svg width="8" height="18" viewBox="0 0 8 18"><path d="M0 0h8v2H0z" fill="#aaa" /><path d="m4 11 3 4H1z" fill="#666" /></svg>
                <VRail><Thumb /></VRail>
                <svg width="8" height="8" viewBox="0 0 8 8"><path d="M1 2h6L4 6z" fill="#666" /></svg>
              </VTrack>
            </VScroll>
          </GridRow>
          <SheetBar>
            <NavButton aria-label="第一个"><Icon size={10} box={10} w={1.5}><path d="M1 0v10M8.500 1l-4 4 4 4" /></Icon></NavButton>
            <NavButton aria-label="上一个"><Icon size={10} box={10} w={1.5}><path d="M7 1 3 5l4 4" /></Icon></NavButton>
            <NavButton aria-label="下一个"><Icon size={10} box={10} w={1.5}><path d="m3 1 4 4-4 4" /></Icon></NavButton>
            <NavButton aria-label="最后一个"><Icon size={10} box={10} w={1.5}><path d="M9 0v10M1.500 1l4 4-4 4" /></Icon></NavButton>
            <SheetTab>Sheet1</SheetTab>
            <IconButton aria-label="新建工作表" $w={24}><Icon size={10} box={10} w={1.8}><path d="M5 0v10M0 5h10" /></Icon></IconButton>
            <Spacer />
            <HScroll>
              <Tick />
              <Icon size={8} box={8}><path d="M6 1v6L2 4z" fill="#666" stroke="none" /></Icon>
              <HRail><Thumb /></HRail>
              <Icon size={8} box={8}><path d="M2 1v6l4-3z" fill="#666" stroke="none" /></Icon>
              <Tick />
            </HScroll>
          </SheetBar>
        </Work>

        <Panel>
          <PanelHead>
            <PanelTitle>属性<Chevron /></PanelTitle>
            <Spacer />
            <IconButton aria-label="固定" $w={24}><IcPin /></IconButton>
            <IconButton aria-label="关闭面板" $w={24}><IcClose /></IconButton>
          </PanelHead>
          <SelectBox>
            <Select aria-label="选项对象"><option>系列选项</option></Select><Thin />
          </SelectBox>
          <PanelTabs>
            <PanelTab>填充与线条</PanelTab><PanelTab>效果</PanelTab><PanelTab $on>系列</PanelTab>
          </PanelTabs>
          <SectionTitle><svg width="8" height="8" viewBox="0 0 8 8"><path d="M0 1h7L3.500 7z" fill="#777" /></svg>系列选项</SectionTitle>
          <Options disabled>
            <Legend>系列绘制在</Legend>
            <RadioRow><Radio type="radio" name="axis" defaultChecked />主坐标轴(P)</RadioRow>
            <RadioRow><Radio type="radio" name="axis" />次坐标轴(S)</RadioRow>
          </Options>
          <SliderField id="overlap" label="系列重叠(O)" value={overlap} min={-100} max={100} onChange={setOverlap} />
          <SliderField id="gap" label="分类间距(G)" value={gap} min={0} max={500} onChange={setGap} />
        </Panel>

        <Rail>
          <IconButton aria-label="收起" $h={16}><IcDash /></IconButton>
          <IconButton aria-label="选择" $w={32} $h={32}><IcCursor /></IconButton>
          <IconButton aria-label="属性" $w={32} $h={32} $active><IcSliders /></IconButton>
          <IconButton aria-label="行列" $w={32} $h={32}><IcTranspose /></IconButton>
          <IconButton aria-label="图库" $w={32} $h={32}><IcGallery /></IconButton>
          <IconButton aria-label="美化" $w={32} $h={32}><IcMagic /></IconButton>
          <IconButton aria-label="查找" $w={32} $h={32}><IcBook /></IconButton>
          <IconButton aria-label="帮助" $w={32} $h={32}><IcHelp /></IconButton>
          <IconButton aria-label="更多工具" $w={32} $h={32}><IcDots /></IconButton>
        </Rail>
      </Body>

      <StatusBar>
        <Icon><path d="M.5 1.500 2 5.500l1.500-4M5.500 1.500v4h2v-4zM5.500 3.500h2M9.500 6V1.500h5V4h-3v6h-2M2 9.500V14h8V9.500zM4 9.500v-2" /></Icon>
        <Spacer />
        <StatusGroup $gap={13} $r={14}>
          <IconButton aria-label="护眼模式"><IcEye /></IconButton>
          <IconButton aria-label="阅读模式" $w={28}><IcCross /><Chevron /></IconButton>
        </StatusGroup>
        <VLine $h={14} />
        <StatusGroup $gap={8} $r={8}>
          <span />
          <IconButton aria-label="普通视图" $w={24} $active><IcNormal /></IconButton>
          <IconButton aria-label="分页预览" $w={24}><IcBreak /></IconButton>
          <IconButton aria-label="页面布局" $w={24}><IcPageView /></IconButton>
        </StatusGroup>
        <VLine $h={14} />
        <ZoomSelect>
          <ZoomField aria-label="缩放比例"><option>160%</option></ZoomField><Chevron />
        </ZoomSelect>
        <StatusGroup $gap={6}>
          <IconButton aria-label="缩小"><Icon size={12} box={12} w={2}><path d="M0 6h12" /></Icon></IconButton>
          <Slider aria-label="缩放" type="range" $w={108} $pct={zoom} min={0} max={100} value={zoom} onChange={e => setZoom(Number(e.target.value))} />
          <IconButton aria-label="放大"><Icon size={10} box={10} w={1.8}><path d="M5 0v10M0 5h10" /></Icon></IconButton>
          <IconButton aria-label="全屏"><IcFull /></IconButton>
        </StatusGroup>
      </StatusBar>

      <Ime>CH<IcMoon />简</Ime>
      <Mark aria-hidden="true">
        <svg width="44" height="42" viewBox="0 0 44 42">
          <defs>
            <linearGradient id="sky" x1="0" y1="1" x2="1" y2="0"><stop offset="0" stopColor="#2f62b5" /><stop offset="1" stopColor="#5fc6ee" /></linearGradient>
            <linearGradient id="leaf" x1="0" y1="1" x2="1" y2="0"><stop offset="0" stopColor="#d8dc3c" /><stop offset="1" stopColor="#3fae5f" /></linearGradient>
          </defs>
          <path d="M43 1C22-1 2 10 1 25c0 6 4 9 9 9-4-4-3-12 3-19C20 8 31 3 43 1z" fill="url(#sky)" />
          <path d="M20 17c11-5 22-2 22 7 0 9-14 16-35 16 14-2 25-7 26-14 0-5-6-8-13-9z" fill="url(#leaf)" />
          <path d="M25 20c-7-2-15 3-14 8 1 4 8 4 11 0-3 1-6 0-6-2 0-3 4-5 9-6z" fill="#4b8fd2" />
        </svg>
        <MarkText><MarkName>极光下载站</MarkName><MarkUrl>www.xz7.com</MarkUrl></MarkText>
      </Mark>
    </Shell>
  );
}
